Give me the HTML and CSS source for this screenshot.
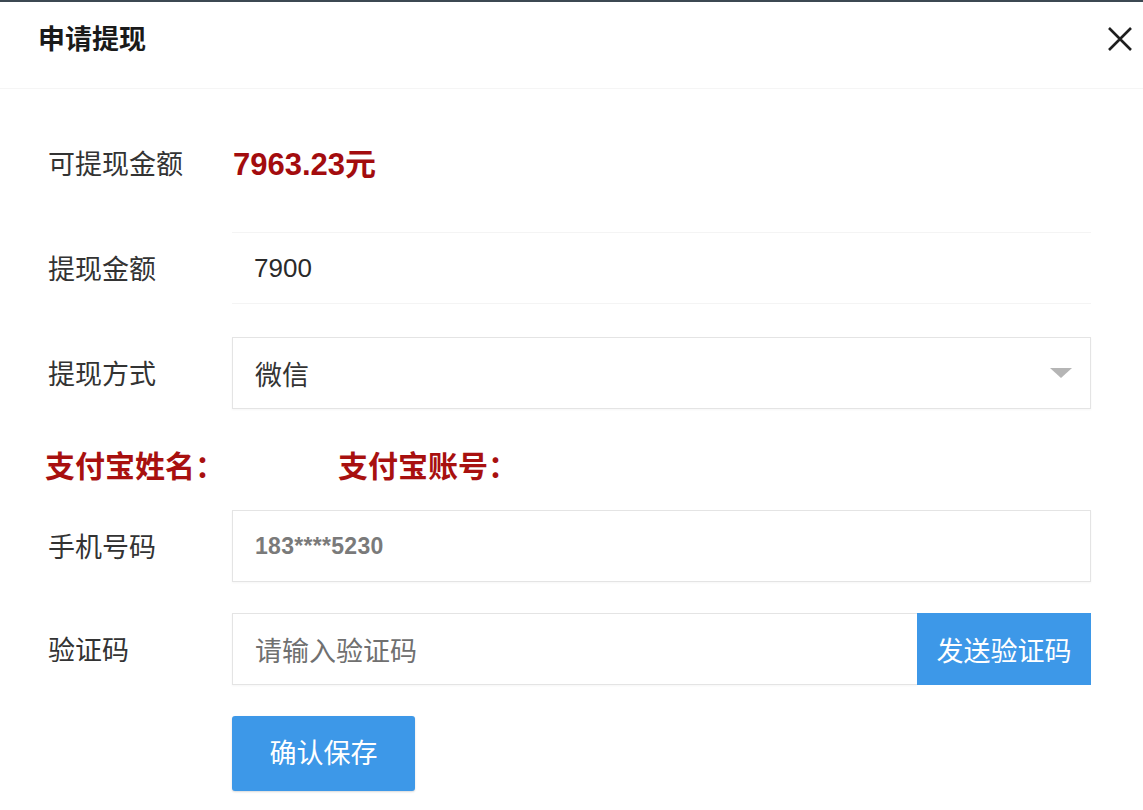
FILE: index.html
```html
<!DOCTYPE html>
<html lang="zh-CN">
<head>
<meta charset="utf-8">
<title>申请提现</title>
<link rel="stylesheet" href="styles.css">
</head>
<body>
<div class="dialog">
  <div class="header">
    <h1 class="title">申请提现</h1>
    <button class="close" aria-label="关闭">
      <svg width="26" height="26" viewBox="0 0 26 26"><path d="M2 2 L24 24 M24 2 L2 24" stroke="#1e1e1e" stroke-width="2.6" fill="none"/></svg>
    </button>
  </div>
  <div class="form">
    <div class="row">
      <div class="label">可提现金额</div>
      <div class="amount">7963.23元</div>
    </div>
    <div class="row">
      <div class="label">提现金额</div>
      <div class="field field-plain"><span class="num">7900</span></div>
    </div>
    <div class="row">
      <div class="label">提现方式</div>
      <div class="field field-box select">
        <span>微信</span>
        <span class="caret"></span>
      </div>
    </div>
    <div class="alipay">
      <span class="red-label">支付宝姓名：</span>
      <span class="red-label second">支付宝账号：</span>
    </div>
    <div class="row tight">
      <div class="label">手机号码</div>
      <div class="field field-box"><span class="phone">183****5230</span></div>
    </div>
    <div class="row tight">
      <div class="label">验证码</div>
      <div class="code-group">
        <div class="field field-box code-input"><span class="placeholder">请输入验证码</span></div>
        <button class="send">发送验证码</button>
      </div>
    </div>
    <div class="actions">
      <button class="save">确认保存</button>
    </div>
  </div>
</div>
</body>
</html>
```

FILE: styles.css
```css
* { box-sizing: border-box; }
html, body { margin: 0; padding: 0; background: #ffffff; }
body {
  font-family: "Noto Sans CJK SC", "Noto Sans", "Liberation Sans", sans-serif;
  color: #333;
  width: 1143px;
  height: 810px;
  overflow: hidden;
}
.dialog {
  border-top: 2px solid #3c4852;
  height: 810px;
  background: #fff;
}
.header {
  height: 87px;
  padding: 18px 10px 0 38px;
  display: flex;
  justify-content: space-between;
  align-items: flex-start;
  border-bottom: 1px solid #f5f5f5;
}
.title {
  margin: 0;
  font-size: 27px;
  line-height: 36px;
  font-weight: 700;
  color: #1a1a1a;
}
.close {
  border: 0;
  background: none;
  padding: 0;
  margin-top: 6px;
  width: 26px;
  height: 26px;
  cursor: pointer;
}
.form {
  padding: 38px 52px 0 48px;
}
.row {
  display: flex;
  align-items: center;
  height: 72px;
  margin-bottom: 33px;
}
.row.tight { margin-bottom: 31px; }
.label {
  width: 184px;
  flex: none;
  font-size: 27px;
  color: #333;
  line-height: 36px;
}
.amount {
  font-family: "Liberation Sans", "Noto Sans CJK SC", sans-serif;
  font-weight: 700;
  font-size: 31px;
  color: #a30c0e;
  margin-left: 1px;
  margin-top: -4px;
}
.field {
  flex: 1;
  height: 72px;
  display: flex;
  align-items: center;
  padding: 0 22px;
  font-size: 27px;
  color: #333;
  background: #fff;
}
.field-plain {
  border-top: 1px solid #f4f4f4;
  border-bottom: 1px solid #f4f4f4;
}
.field-box {
  border: 1px solid #e4e4e4;
  box-shadow: 0 1px 2px rgba(0,0,0,0.04);
}
.num {
  font-family: "Liberation Sans", sans-serif;
  font-size: 26px;
  color: #2a2a2a;
}
.select {
  justify-content: space-between;
  padding-right: 18px;
}
.caret {
  width: 0;
  height: 0;
  border-left: 11px solid transparent;
  border-right: 11px solid transparent;
  border-top: 10px solid #b5b5b5;
}
.alipay {
  display: flex;
  padding-top: 3px;
  height: 42px;
  margin-bottom: 26px;
  margin-left: -3px;
}
.red-label {
  font-size: 30px;
  line-height: 38px;
  font-weight: 700;
  color: #a8100f;
}
.red-label.second { margin-left: 113px; }
.phone {
  font-family: "Liberation Sans", sans-serif;
  font-weight: 700;
  font-size: 23px;
  letter-spacing: 0.3px;
  color: #7a7a7a;
}
.code-group {
  flex: 1;
  display: flex;
  height: 72px;
}
.code-input { border-right: 0; }
.placeholder { color: #707070; }
.send {
  width: 174px;
  flex: none;
  border: 0;
  background: #3d98e8;
  color: #fff;
  font-family: inherit;
  font-size: 27px;
  padding: 0;
  cursor: pointer;
}
.actions {
  padding-left: 184px;
}
.save {
  width: 183px;
  height: 75px;
  border: 0;
  border-radius: 3px;
  background: #3d98e8;
  color: #fff;
  font-family: inherit;
  font-size: 27px;
  padding: 0 0 4px;
  box-shadow: 0 1px 2px rgba(0,0,0,0.15);
  cursor: pointer;
}
```
